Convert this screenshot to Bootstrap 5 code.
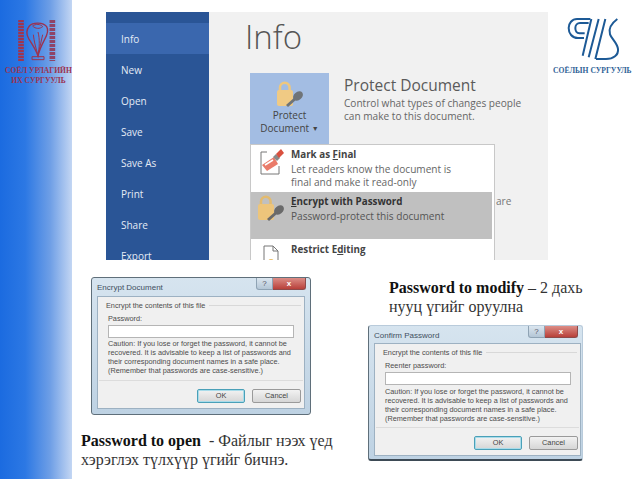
<!DOCTYPE html>
<html lang="en">
<head>
<meta charset="UTF-8">
<meta name="viewport" content="width=device-width, initial-scale=1.0">
<title>Password</title>
<link href="https://cdn.jsdelivr.net/npm/bootstrap@5.3.0/dist/css/bootstrap.min.css" rel="stylesheet">
<style>
body { margin: 0; background: #fff; }
.slide { position: relative; width: 638px; height: 479px; overflow: hidden; background: #fff; font-family: "Open Sans", sans-serif; }
.side-band { position: absolute; left: 0; top: 0; width: 72px; height: 479px; background: linear-gradient(90deg, #1b6be0 0%, #2c78e4 35%, #6f9fe6 70%, #c3d6f3 100%); }
.left-logo { position: absolute; left: 0; top: 0; width: 72px; height: 90px; }
.left-logo svg { position: absolute; left: 14px; top: 16px; }
.left-text { position: absolute; left: 5px; width: 67px; top: 66px; text-align: center; color: #9c3350; font: bold 7.6px/10px "Liberation Serif", serif; white-space: nowrap; }
.right-logo { position: absolute; left: 553px; top: 14px; width: 76px; text-align: center; }
.right-logo svg { display: block; margin-left: 9px; }
.right-text { color: #2f6296; font: bold 7.6px/10px "Liberation Serif", serif; white-space: nowrap; margin-top: 2px; }

.word-shot { position: absolute; left: 106px; top: 12px; width: 442px; height: 248px; background: #f1f1f1; overflow: hidden; }
.word-nav { width: 103px; height: 100%; background: #2a5596; padding-top: 11px; color: #e4ebf5; font-size: 10px; }
.word-nav div { height: 31px; line-height: 32px; padding-left: 15px; }
.word-nav .on { background: #3a67ae; }
.word-title { position: absolute; left: 139px; top: 0; font-size: 33px; line-height: 50px; font-weight: 300; color: #555; }
.prot-btn { position: absolute; left: 144px; top: 61px; width: 79px; height: 71px; background: #a3bde3; color: #444; text-align: center; font-size: 10px; line-height: 13px; padding-top: 8px; }
.prot-btn svg { display: block; margin: 0 auto 1px 25px; }
.drop-mark { font-size: 7px; vertical-align: 1px; }
.prot-head { position: absolute; left: 238px; top: 62px; font-size: 15.5px; line-height: 22px; color: #5a5a5a; }
.prot-desc { position: absolute; left: 238px; top: 85px; font-size: 10.1px; line-height: 13px; color: #666; white-space: nowrap; }
.ware { position: absolute; left: 390px; top: 183px; font-size: 10.1px; line-height: 13px; color: #777; }
.prot-menu { position: absolute; left: 144px; top: 132px; width: 245px; height: 130px; background: #fff; border: 1px solid #c8c8c8; }
.menu-row { display: flex; height: 47px; padding: 3px 0 0 0; color: #666; font-size: 10.1px; line-height: 13px; white-space: nowrap; }
.menu-row b { color: #444; font-size: 9.8px; font-weight: 700; display: block; margin-bottom: 2px; }
.menu-row.sel { background: #c0c0c0; margin-right: 2px; color: #555; }
.menu-row.sel b { color: #333; }
.menu-row.last { padding-top: 4px; }
.menu-ico { width: 40px; flex: none; text-align: center; padding-right: 1px; }
.menu-row u { text-decoration-thickness: 1px; }

.win-dlg { position: absolute; width: 220px; height: 138px; padding: 18px 5px 5px; border: 1px solid #5f6f7a; border-radius: 3px; background: linear-gradient(180deg, #d6e4ef, #bed2e3); color: #4c4c4c; font-family: "Liberation Sans", sans-serif; }
.dlg-one { left: 91px; top: 277px; }
.dlg-two { left: 368px; top: 325px; width: 215px; height: 136px; padding: 17px 1px 3px 5px; border-top-color: #b9cbdb; border-right-color: #b9cbdb; border-bottom: 2px solid #3d4a55; }
.dlg-title { position: absolute; left: 5px; top: 4px; font-size: 8px; line-height: 12px; color: #3f4f60; }
.dlg-btns { position: absolute; right: 4px; top: 0; display: flex; }
.dlg-q { width: 17px; height: 12px; background: linear-gradient(180deg, #dbe6ef, #b4c6d6); border: 1px solid #8fa3b4; border-top: 0; border-radius: 0 0 0 3px; font-size: 8px; line-height: 11px; text-align: center; color: #556; }
.dlg-x { width: 33px; height: 12px; background: linear-gradient(180deg, #dc8d86, #b8403a); border: 1px solid #8d4a4a; border-top: 0; border-left: 0; border-radius: 0 0 3px 0; font-size: 8px; line-height: 11px; text-align: center; color: #fff; font-weight: 700; }
.dlg-body { height: 100%; background: #f0f0f0; border: 1px solid #9db1c2; padding: 4px 0 0 8px; font-size: 7.3px; line-height: 9.3px; position: relative; white-space: nowrap; }
.dlg-rule { height: 1px; background: #d8d8d8; margin-right: 3px; }
.dlg-lbl { margin: 4px 0 0 2px; }
.dlg-input.form-control { width: 186px; height: 13px; min-height: 13px; padding: 0; margin: 1px 0 1px 2px; border: 1px solid #b5b5b5; border-radius: 0; background: #fff; }
.dlg-note { margin-left: 2px; }
.dlg-two .dlg-note { margin-top: 2px; }
.dlg-foot { position: absolute; left: 1px; right: 1px; bottom: 0; height: 28px; border-top: 1px solid #dcdcdc; }
.dlg-ok.btn, .dlg-cancel.btn { position: absolute; top: 8px; height: 14px; padding: 0; border-radius: 2px; font-size: 7.4px; line-height: 12px; color: #444; background: linear-gradient(180deg, #f2f2f2, #d6d6d6); border: 1px solid #9a9a9a; }
.dlg-ok.btn { right: 58px; width: 48px; border-color: #4aa0b8; box-shadow: inset 0 0 0 1px #a9dcea; }
.dlg-cancel.btn { right: 2px; width: 49px; }
.dlg-two .dlg-ok.btn { right: 57px; }
.dlg-two .dlg-cancel.btn { right: 1px; }

.cap { position: absolute; font-family: "Liberation Serif", serif; font-size: 16px; line-height: 19px; color: #333; white-space: nowrap; }
.cap b { color: #111; }
.cap-one { left: 81px; top: 431px; }
.cap-two { left: 389px; top: 278px; }
</style>
</head>
<body>
<div class="slide">
  <div class="side-band"></div>
  <div class="left-logo">
    <svg width="44" height="48" viewBox="0 0 132 144" fill="none">
      <path d="M21 12V135" stroke="#a0354f" stroke-width="17" stroke-dasharray="7 2"/>
      <path d="M115 12V135" stroke="#8f4468" stroke-width="17" stroke-dasharray="9 3"/>
      <path d="M46 30c10-12 42-12 52 2 6 10 2 24-6 38-8 15-16 32-20 50-6-18-18-36-28-52-8-14-6-28 2-38z" stroke="#9c3350" stroke-width="4"/>
      <path d="M56 30c8-7 24-6 30 2-8 7-22 7-30-2zM72 48c6 22 4 48 0 70M58 56c2 20 8 42 14 62M86 56c-4 20-10 42-14 62" stroke="#9c3350" stroke-width="3"/>
      <path d="M54 122h36v9H54z" stroke="#9c3350" stroke-width="3"/>
    </svg>
    <div class="left-text">СОЁЛ УРЛАГИЙН<br>ИХ СУРГУУЛЬ</div>
  </div>

  <div class="word-shot">
    <div class="word-nav">
      <div class="on">Info</div>
      <div>New</div>
      <div>Open</div>
      <div>Save</div>
      <div>Save As</div>
      <div>Print</div>
      <div>Share</div>
      <div>Export</div>
    </div>
    <div class="word-title">Info</div>
    <div class="prot-btn">
      <svg width="30" height="27" viewBox="0 0 30 27">
        <path d="M5 10V6.500a4.800 4.800 0 0 1 9.600 0V10" fill="none" stroke="#eec77e" stroke-width="2.500"/>
        <rect x="2" y="9" width="16" height="16" rx="2" fill="#f0ca84"/>
        <path d="M12 25l9-8" stroke="#6f7478" stroke-width="3"/>
        <ellipse cx="23" cy="15" rx="5.500" ry="4" transform="rotate(-40 23 15)" fill="#6f7478"/>
      </svg>
      Protect<br>Document <span class="drop-mark">▼</span>
    </div>
    <div class="prot-head">Protect Document</div>
    <div class="prot-desc">Control what types of changes people<br>can make to this document.</div>
    <div class="ware">are</div>
    <div class="prot-menu">
      <div class="menu-row">
        <div class="menu-ico">
          <svg width="28" height="28" viewBox="0 0 28 28">
            <path d="M10 4H4v22h18v-8" fill="none" stroke="#777" stroke-width="1"/>
            <path d="M5 17l12-8 4 7-11 7z" fill="#ea7b6a"/>
            <path d="M8 17l8-5" stroke="#fff" stroke-width="1.500"/>
            <path d="M16 9l4 4 3-3-4-4z" fill="#8a8a8a"/>
            <path d="M19 6l5-5 3 4-5 5z" fill="#d9503f"/>
          </svg>
        </div>
        <div><b>Mark as <u>F</u>inal</b>Let readers know the document is<br>final and make it read-only</div>
      </div>
      <div class="menu-row sel">
        <div class="menu-ico">
          <svg width="30" height="27" viewBox="0 0 30 27">
            <path d="M5 10V6.500a4.800 4.800 0 0 1 9.600 0V10" fill="none" stroke="#e3bb6f" stroke-width="2.500"/>
            <rect x="2" y="9" width="16" height="16" rx="2" fill="#edc57b"/>
            <path d="M12 25l9-8" stroke="#6a6a6a" stroke-width="3"/>
            <ellipse cx="23" cy="15" rx="5.500" ry="4" transform="rotate(-40 23 15)" fill="#6a6a6a"/>
          </svg>
        </div>
        <div><b><u>E</u>ncrypt with Password</b>Password-protect this document</div>
      </div>
      <div class="menu-row last">
        <div class="menu-ico">
          <svg width="22" height="24" viewBox="0 0 22 24">
            <path d="M4 3h9l5 5v14M4 3v19M13 3v5h5" fill="none" stroke="#777" stroke-width="1"/>
            <circle cx="11" cy="19" r="3" fill="#e9bd66"/>
          </svg>
        </div>
        <div><b>Restrict E<u>d</u>iting</b></div>
      </div>
    </div>
  </div>

  <div class="right-logo">
    <svg width="62" height="50" viewBox="0 0 186 150" fill="none" stroke="#1d5a96" stroke-width="6">
      <path d="M85 15H45C30 15 20 28 20 42c0 16 10 30 28 30h18"/>
      <path d="M68 58H52c-8 0-12-8-12-16 0-9 6-15 14-15h26"/>
      <path d="M88 15L62 125M110 15L80 130M130 15L100 135"/>
      <path d="M166 15c-16 12-28 28-22 46 5 14 22 26 24 44 2 18-14 30-36 30h-30"/>
    </svg>
    <div class="right-text">СОЁЛЫН СУРГУУЛЬ</div>
  </div>

  <div class="win-dlg dlg-one">
    <div class="dlg-title">Encrypt Document</div>
    <div class="dlg-btns"><div class="dlg-q">?</div><div class="dlg-x">x</div></div>
    <div class="dlg-body">
      <div class="d-flex align-items-center gap-1"><span>Encrypt the contents of this file</span><div class="dlg-rule flex-fill"></div></div>
      <div class="dlg-lbl">Password:</div>
      <input class="form-control dlg-input" type="text">
      <div class="dlg-note">Caution: If you lose or forget the password, it cannot be<br>recovered. It is advisable to keep a list of passwords and<br>their corresponding document names in a safe place.<br>(Remember that passwords are case-sensitive.)</div>
      <div class="dlg-foot">
        <button class="btn dlg-ok" type="button">OK</button>
        <button class="btn dlg-cancel" type="button">Cancel</button>
      </div>
    </div>
  </div>

  <div class="win-dlg dlg-two">
    <div class="dlg-title">Confirm Password</div>
    <div class="dlg-btns"><div class="dlg-q">?</div><div class="dlg-x">x</div></div>
    <div class="dlg-body">
      <div class="d-flex align-items-center gap-1"><span>Encrypt the contents of this file</span><div class="dlg-rule flex-fill"></div></div>
      <div class="dlg-lbl">Reenter password:</div>
      <input class="form-control dlg-input" type="text">
      <div class="dlg-note">Caution: If you lose or forget the password, it cannot be<br>recovered. It is advisable to keep a list of passwords and<br>their corresponding document names in a safe place.<br>(Remember that passwords are case-sensitive.)</div>
      <div class="dlg-foot">
        <button class="btn dlg-ok" type="button">OK</button>
        <button class="btn dlg-cancel" type="button">Cancel</button>
      </div>
    </div>
  </div>

  <div class="cap cap-one"><b>Password to open</b> &nbsp;- Файлыг нээх үед<br>хэрэглэх түлхүүр үгийг бичнэ.</div>
  <div class="cap cap-two"><b>Password to modify</b> – 2 дахь<br>нууц үгийг оруулна</div>
</div>
<script src="https://cdn.jsdelivr.net/npm/bootstrap@5.3.0/dist/js/bootstrap.bundle.min.js"></script>
</body>
</html>
